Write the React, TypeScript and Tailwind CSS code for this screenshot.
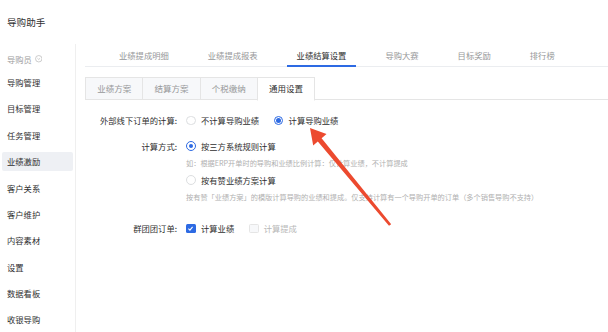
const menu = [
  "导购管理",
  "目标管理",
  "任务管理",
  "业绩激励",
  "客户关系",
  "客户维护",
  "内容素材",
  "设置",
  "数据看板",
  "收银导购",
];

const topTabs = ["业绩提成明细", "业绩提成报表", "业绩结算设置", "导购大赛", "目标奖励", "排行榜"];
const cardTabs = ["业绩方案", "结算方案", "个税缴纳", "通用设置"];

const Radio = ({ checked }: { checked?: boolean }) => (
  <span
    className={`w-[9.5px] h-[9.5px] rounded-full border flex items-center justify-center shrink-0 ${
      checked ? "border-[#2d6ae3]" : "border-[#dcdee0]"
    }`}
  >
    {checked && <span className="w-[4.5px] h-[4.5px] rounded-full bg-[#2d6ae3]" />}
  </span>
);

const Check = ({ checked }: { checked?: boolean }) =>
  checked ? (
    <span className="w-[9.5px] h-[9.5px] rounded-[1.5px] bg-[#2d6ae3] flex items-center justify-center shrink-0">
      <svg width="7" height="7" viewBox="0 0 10 10">
        <polyline points="2,5.2 4.2,7.3 8,2.8" fill="none" stroke="#fff" strokeWidth="1.5" />
      </svg>
    </span>
  ) : (
    <span className="w-[9.5px] h-[9.5px] rounded-[1.5px] bg-[#f7f8fa] border border-[#e5e5e5] shrink-0" />
  );

export default function App() {
  return (
    <div
      className="relative w-[608px] h-[332px] bg-white overflow-hidden text-[#2f2f30]"
      style={{ fontFamily: '"Noto Sans CJK SC", "Noto Sans", sans-serif' }}
    >
      <div className="h-[44px] flex items-center pl-[7px] text-[9.6px]">导购助手</div>

      <div className="flex h-[288px]">
        {/* sidebar */}
        <div className="w-[76px] border-r border-[#efefef] shrink-0">
          <div className="h-[20px] mt-[5px] flex items-center pl-[7px] gap-[3px] text-[8.3px] text-[#a0a0a0]">
            <span>导购员</span>
            <svg width="7.5" height="7.5" viewBox="0 0 10 10">
              <circle cx="5" cy="5" r="4.3" fill="none" stroke="#b5b5b5" strokeWidth="0.9" />
              <polyline points="3.2,4.3 5,6 6.8,4.3" fill="none" stroke="#b5b5b5" strokeWidth="0.9" />
            </svg>
          </div>
          {menu.map((m) => (
            <div key={m} className="h-[26.4px] py-[4px] px-[2px]">
              <div
                className={`h-full flex items-center pl-[5px] rounded-[2px] text-[8.3px] ${
                  m === "业绩激励" ? "bg-[#eef0f4]" : ""
                }`}
              >
                {m}
              </div>
            </div>
          ))}
        </div>

        {/* main */}
        <div className="flex-1 pl-[9px]">
          <div className="h-[22.5px] border-b border-[#ebedf0] flex pl-[24px] gap-[19px]">
            {topTabs.map((t) => (
              <div
                key={t}
                className={`relative px-[10px] flex items-center text-[8.3px] ${
                  t === "业绩结算设置" ? "text-[#2f2f30]" : "text-[#969799]"
                }`}
              >
                {t}
                {t === "业绩结算设置" && (
                  <span className="absolute left-0 right-0 bottom-[-1px] h-[1.5px] bg-[#2d6ae3]" />
                )}
              </div>
            ))}
          </div>

          <div className="mt-[10px] flex border-b border-[#e5e5e5] h-[23.5px]">
            {cardTabs.map((t, i) => (
              <div
                key={t}
                className={`w-[58.3px] border border-[#e5e5e5] flex items-center justify-center text-[8.5px] ${
                  i > 0 ? "-ml-px" : ""
                } ${
                  t === "通用设置"
                    ? "bg-white border-b-white h-[24.5px] text-[#2f2f30]"
                    : "bg-[#f7f8fa] h-[23.5px] text-[#969799]"
                }`}
              >
                {t}
              </div>
            ))}
          </div>

          <div className="text-[8.3px]">
            {/* row 1 */}
            <div className="flex items-center h-[16px] mt-[12.5px]">
              <div className="w-[92px] text-right">外部线下订单的计算:</div>
              <div className="ml-[9px] flex items-center">
                <Radio />
                <span className="ml-[5.5px]">不计算导购业绩</span>
                <span className="ml-[14.5px]" />
                <Radio checked />
                <span className="ml-[5.5px]">计算导购业绩</span>
              </div>
            </div>

            {/* row 2 */}
            <div className="flex mt-[9.7px]">
              <div className="w-[92px] text-right h-[16px] flex items-center justify-end">计算方式:</div>
              <div className="ml-[9px]">
                <div className="flex items-center h-[16px]">
                  <Radio checked />
                  <span className="ml-[5.5px]">按三方系统规则计算</span>
                </div>
                <div className="h-[12px] mt-[3.6px] flex items-center text-[7.2px] text-[#b0b0b0] whitespace-nowrap">
                  如：根据ERP开单时的导购和业绩比例计算：仅计算业绩，不计算提成
                </div>
                <div className="flex items-center h-[16px] mt-[2.4px]">
                  <Radio />
                  <span className="ml-[5.5px]">按有赞业绩方案计算</span>
                </div>
                <div className="h-[12px] mt-[3.6px] flex items-center text-[7.2px] text-[#b0b0b0] whitespace-nowrap">
                  按有赞「业绩方案」的模版计算导购的业绩和提成。仅支持计算有一个导购开单的订单（多个销售导购不支持）
                </div>
              </div>
            </div>

            {/* row 3 */}
            <div className="flex items-center h-[16px] mt-[16.7px]">
              <div className="w-[92px] text-right">群团团订单:</div>
              <div className="ml-[9px] flex items-center">
                <Check checked />
                <span className="ml-[5.5px]">计算业绩</span>
                <span className="ml-[15px]" />
                <Check />
                <span className="ml-[5px] text-[#b8b8b8]">计算提成</span>
              </div>
            </div>
          </div>
        </div>
      </div>

      {/* annotation arrow */}
      <svg className="absolute left-0 top-0 pointer-events-none" width="608" height="332" viewBox="0 0 608 332">
        <polygon
          points="310,128 326.5,134 321.6,138.2 391.2,224.2 389,225.8 317.8,141.4 313.2,145.5"
          fill="#ec4a2f"
        />
      </svg>
    </div>
  );
}
